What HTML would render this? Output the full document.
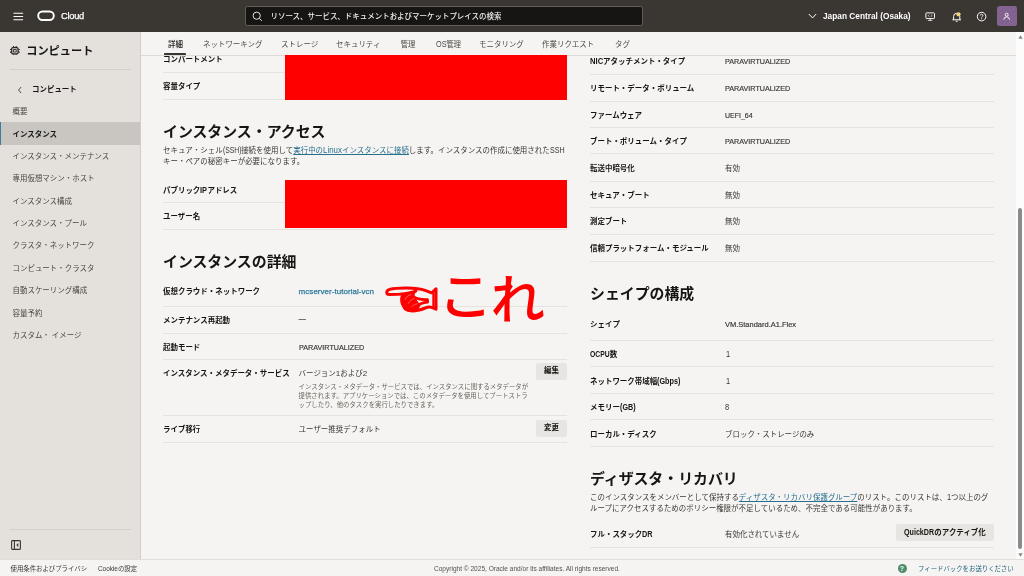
<!DOCTYPE html>
<html lang="ja">
<head>
<meta charset="utf-8">
<title>インスタンスの詳細 | Oracle Cloud</title>
<style>
*{box-sizing:border-box;margin:0;padding:0}
html,body{width:1024px;height:576px;overflow:hidden;background:#f5f4f2}
body{position:relative;font-family:"Liberation Sans","Noto Sans CJK JP",sans-serif;font-size:7.47px;color:#161513;line-height:12px}
.abs,.abs>*{position:absolute}
div,span,a,svg{position:absolute;white-space:nowrap}
#hdr{left:0;top:0;width:1024px;height:32px;background:#3a3632}
#side{left:0;top:32px;width:140px;height:527px;background:#e4e1dd}
#main{left:140px;top:32px;width:876px;height:527px;background:#f5f4f2;border-left:1px solid #d2cec9}
#tabs{left:141px;top:32px;width:875px;height:24px;background:#f5f4f2;border-bottom:1px solid #dddad6}
#foot{left:0;top:559px;width:1024px;height:17px;background:#f5f4f2;border-top:1px solid #e1ddd8}
#sbar{left:1016px;top:32px;width:8px;height:527px;background:#fcfcfc}
.t{font-size:7.47px;line-height:12px;color:#4f4a45;font-weight:400}
.t.on{color:#161513;font-weight:500}
.l{font-size:7.47px;line-height:12px;font-weight:700;color:#161513}
.v{font-size:7.47px;line-height:12px;color:#3a3632}
.h{font-size:14.9px;line-height:20px;font-weight:700;color:#161513}
.p{font-size:7.47px;line-height:10.7px;color:#3a3632;white-space:normal}
.d{font-size:6.4px;line-height:9.07px;color:#6b6660;white-space:normal}
.s{height:1px;background:#e6e3df}
.lk{color:#27708f;text-decoration:underline;text-underline-offset:1px}
.btn{height:17px;border-radius:2px;background:#e7e5e2;font-size:7.47px;line-height:17px;font-weight:700;color:#161513;text-align:center}
.n{font-size:7.47px;line-height:12px;color:#4a4641;left:12.5px;font-weight:400}
.red{background:#fe0000;z-index:5}
.b{position:static;display:inline-block;font-size:8.3px;line-height:10px;transform-origin:0 50%}
.e{position:static;display:inline-block;font-size:8px;-webkit-text-stroke:.18px #3a3632;transform-origin:0 50%;transform:scaleX(.9);vertical-align:baseline}
</style>
</head>
<body>
<div id="root" style="left:0;top:0;width:1024px;height:576px;will-change:transform">
<div id="main"></div>
<div id="content" style="left:0;top:0">
<span class="l" style="left:163px;top:53.75px">コンパートメント</span>
<div class="s" style="left:163px;top:72px;width:404px"></div>
<span class="l" style="left:163px;top:80.75px">容量タイプ</span>
<div class="s" style="left:163px;top:99px;width:404px"></div>
<div class="red" style="left:285px;top:55px;width:282.4px;height:45px"></div>
<span class="h" style="left:163px;top:121.75px">インスタンス・アクセス</span>
<div class="p" style="left:163px;top:145.1px;width:410px">セキュア・シェル<span class="b" style="transform:scaleX(0.82);margin-right:-4.07px;font-weight:400">(SSH)</span>接続を使用して<span class="lk" style="position:static">実行中の<span class="b" style="transform:scaleX(0.95);margin-right:-0.99px;font-weight:400;text-decoration:underline">Linux</span>インスタンスに接続</span>します。インスタンスの作成に使用された<span class="b" style="transform:scaleX(0.86);margin-right:-2.39px;font-weight:400">SSH</span><br>キー・ペアの秘密キーが必要になります。</div>
<span class="l" style="left:163px;top:184.75px">パブリック<span class="b" style="transform:scaleX(0.9);margin-right:-0.78px">IP</span>アドレス</span>
<div class="s" style="left:163px;top:202px;width:404px"></div>
<span class="l" style="left:163px;top:210.75px">ユーザー名</span>
<div class="s" style="left:163px;top:229px;width:404px"></div>
<div class="red" style="left:285px;top:180px;width:282.4px;height:48px"></div>
<span class="h" style="left:163px;top:251.75px">インスタンスの詳細</span>
<span class="l" style="left:163px;top:286.25px">仮想クラウド・ネットワーク</span>
<span class="v" style="left:298.6px;top:286.25px"><span style="position:static;color:#2f7b9c;font-size:8px;letter-spacing:.04px;-webkit-text-stroke:.25px #2f7b9c">mcserver-tutorial-vcn</span></span>
<div class="s" style="left:163px;top:306px;width:404px"></div>
<span class="l" style="left:163px;top:314.75px">メンテナンス再起動</span>
<span class="v" style="left:298.6px;top:314.75px"><span style="position:relative;top:-1.3px;font-weight:700;color:#4a4641">—</span></span>
<div class="s" style="left:163px;top:333px;width:404px"></div>
<span class="l" style="left:163px;top:341.75px">起動モード</span>
<span class="v" style="left:298.6px;top:341.75px"><span class="e">PARAVIRTUALIZED</span></span>
<div class="s" style="left:163px;top:359px;width:404px"></div>
<span class="l" style="left:163px;top:367.75px">インスタンス・メタデータ・サービス</span>
<span class="v" style="left:298.6px;top:367.75px">バージョン<span style="position:static;font-size:8px">1</span>および<span style="position:static;font-size:8px">2</span></span>
<div class="s" style="left:163px;top:415px;width:404px"></div>
<div class="d" style="left:298.6px;top:381.5px;width:235px">インスタンス・メタデータ・サービスでは、インスタンスに関するメタデータが<br>提供されます。アプリケーションでは、このメタデータを使用してブートストラ<br>ップしたり、他のタスクを実行したりできます。</div>
<div class="btn" style="left:536px;top:363.4px;width:31px;height:16.9px;line-height:16.9px">編集</div>
<span class="l" style="left:163px;top:423.75px">ライブ移行</span>
<span class="v" style="left:298.6px;top:423.75px">ユーザー推奨デフォルト</span>
<div class="s" style="left:163px;top:442px;width:404px"></div>
<div class="btn" style="left:536px;top:420px;width:31px;height:16.5px;line-height:16.5px">変更</div>
<span class="l" style="left:590px;top:56px"><span class="b" style="transform:scaleX(0.92);margin-right:-1.2px">NIC</span>アタッチメント・タイプ</span>
<span class="v" style="left:725px;top:56px"><span class="e">PARAVIRTUALIZED</span></span>
<div class="s" style="left:590px;top:74px;width:404px"></div>
<span class="l" style="left:590px;top:82.75px">リモート・データ・ボリューム</span>
<span class="v" style="left:725px;top:82.75px"><span class="e">PARAVIRTUALIZED</span></span>
<div class="s" style="left:590px;top:101px;width:404px"></div>
<span class="l" style="left:590px;top:109.75px">ファームウェア</span>
<span class="v" style="left:725px;top:109.75px"><span class="e" style="transform:scaleX(.875)">UEFI_64</span></span>
<div class="s" style="left:590px;top:127px;width:404px"></div>
<span class="l" style="left:590px;top:135.75px">ブート・ボリューム・タイプ</span>
<span class="v" style="left:725px;top:135.75px"><span class="e">PARAVIRTUALIZED</span></span>
<div class="s" style="left:590px;top:153px;width:404px"></div>
<span class="l" style="left:590px;top:162.75px">転送中暗号化</span>
<span class="v" style="left:725px;top:162.75px">有効</span>
<div class="s" style="left:590px;top:181px;width:404px"></div>
<span class="l" style="left:590px;top:189.75px">セキュア・ブート</span>
<span class="v" style="left:725px;top:189.75px">無効</span>
<div class="s" style="left:590px;top:207px;width:404px"></div>
<span class="l" style="left:590px;top:215.75px">測定ブート</span>
<span class="v" style="left:725px;top:215.75px">無効</span>
<div class="s" style="left:590px;top:234px;width:404px"></div>
<span class="l" style="left:590px;top:242.75px">信頼プラットフォーム・モジュール</span>
<span class="v" style="left:725px;top:242.75px">無効</span>
<div class="s" style="left:590px;top:261px;width:404px"></div>
<span class="h" style="left:590px;top:283.75px">シェイプの構成</span>
<span class="l" style="left:590px;top:318.75px">シェイプ</span>
<span class="v" style="left:725px;top:318.75px"><span class="e" style="transform:scaleX(.935)">VM.Standard.A1.Flex</span></span>
<div class="s" style="left:590px;top:340px;width:404px"></div>
<span class="l" style="left:590px;top:348.75px"><span class="b" style="transform:scaleX(0.82);margin-right:-4.22px">OCPU</span>数</span>
<span class="v" style="left:725px;top:348.75px"><span class="b" style="transform:scaleX(0.9);margin-right:-0.46px;font-weight:400;margin-left:.8px">1</span></span>
<div class="s" style="left:590px;top:366px;width:404px"></div>
<span class="l" style="left:590px;top:375.75px">ネットワーク帯域幅<span class="b" style="transform:scaleX(0.88);margin-right:-3.34px">(Gbps)</span></span>
<span class="v" style="left:725px;top:375.75px"><span class="b" style="transform:scaleX(0.9);margin-right:-0.46px;font-weight:400;margin-left:.8px">1</span></span>
<div class="s" style="left:590px;top:393px;width:404px"></div>
<span class="l" style="left:590px;top:401.75px">メモリー<span class="b" style="transform:scaleX(0.87);margin-right:-2.37px">(GB)</span></span>
<span class="v" style="left:725px;top:401.75px"><span class="b" style="transform:scaleX(0.9);margin-right:-0.46px;font-weight:400">8</span></span>
<div class="s" style="left:590px;top:419px;width:404px"></div>
<span class="l" style="left:590px;top:428.75px">ローカル・ディスク</span>
<span class="v" style="left:725px;top:428.75px">ブロック・ストレージのみ</span>
<div class="s" style="left:590px;top:446px;width:404px"></div>
<span class="h" style="left:590px;top:468.75px">ディザスタ・リカバリ</span>
<div class="p" style="left:590px;top:492.1px;width:410px">このインスタンスをメンバーとして保持する<span class="lk" style="position:static">ディザスタ・リカバリ保護グループ</span>のリスト。このリストは、<span class="b" style="transform:scaleX(0.9);margin-right:-0.46px;font-weight:400">1</span>つ以上のグ<br>ループにアクセスするためのポリシー権限が不足しているため、不完全である可能性があります。</div>
<span class="l" style="left:590px;top:528.75px">フル・スタック<span class="b" style="transform:scaleX(0.88);margin-right:-1.44px">DR</span></span>
<span class="v" style="left:725px;top:528.75px">有効化されていません</span>
<div class="s" style="left:590px;top:547px;width:404px"></div>
<div class="btn" style="left:896px;top:524px;width:98px;line-height:18.4px"><span class="b" style="transform:scaleX(0.86);margin-right:-4.91px">QuickDR</span>のアクティブ化</div>
<svg style="left:380px;top:270px" width="170" height="56" viewBox="380 270 170 56">
<g transform="translate(0 .6)">
<path d="M415.8 290.5 C409.2 293.0 400.8 294.0 389.6 294.0 C385.8 294.0 385.8 290.2 389.6 288.8 C396.7 286.9 416.7 286.5 425.0 289.8 L431.7 292.3 L436.0 288.2 L436.0 308.6 L431.7 306.8 C427.5 305.2 425.0 308.2 419.2 309.4 C413.3 310.8 408.3 310.8 405.0 308.2" fill="none" stroke="#fe0000" stroke-width="3" stroke-linejoin="round" stroke-linecap="round"/>
<path d="M433.5 293.3 L433.5 306.5" fill="none" stroke="#fe0000" stroke-width="2.4" stroke-linecap="round"/>
<path d="M401.5 295.2 C405.0 292.8 411.7 291.1 415.4 290.7 C412.9 294.0 413.3 296.5 416.7 300.7 C419.6 304.0 420.0 307.3 416.7 309.4 C411.7 311.1 406.7 310.7 403.8 307.3 C401.2 304.0 400.4 299.0 401.5 295.2 Z" fill="#fe0000" stroke="#fe0000" stroke-width="1.6" stroke-linejoin="round"/>
<path d="M413.3 296.1 C416.7 298.2 421.7 299.4 427.5 299.0 L427.7 301.5 C423.3 301.9 419.2 302.8 417.9 305.7" fill="none" stroke="#fe0000" stroke-width="2.7" stroke-linejoin="round" stroke-linecap="round"/>
<path d="M405.0 299.0 C405.8 296.5 408.3 294.8 410.8 294.0" fill="none" stroke="#ff8a8a" stroke-width=".7" stroke-linecap="round"/>
<path d="M408.3 302.8 C410.0 300.2 411.7 298.6 414.2 297.8" fill="none" stroke="#ff8a8a" stroke-width=".7" stroke-linecap="round"/>
<path d="M411.7 306.1 C413.3 304.4 415.0 303.6 417.1 303.2" fill="none" stroke="#ff8a8a" stroke-width=".6" stroke-linecap="round"/>
</g>
<text transform="translate(446.9 278.5) scale(.544 .513) translate(-36 -48)" x="20" y="120" font-family="'Liberation Sans','Noto Sans CJK JP',sans-serif" font-size="100" font-weight="500" fill="#fe0000">こ</text>
<text transform="translate(493.3 275.2) scale(.544 .535) translate(-225 -39)" x="220" y="120" font-family="'Liberation Sans','Noto Sans CJK JP',sans-serif" font-size="100" font-weight="500" fill="#fe0000">れ</text>
</svg>
</div>
<div id="tabs">
<span class="t on" style="left:27px;top:6.75px">詳細</span>
<div style="left:23px;top:21px;width:21.6px;height:2px;background:#3a3632;border-radius:1px 1px 0 0"></div>
<span class="t" style="left:62px;top:6.75px">ネットワーキング</span>
<span class="t" style="left:140px;top:6.75px">ストレージ</span>
<span class="t" style="left:195px;top:6.75px">セキュリティ</span>
<span class="t" style="left:259.5px;top:6.75px">管理</span>
<span class="t" style="left:294.6px;top:6.75px"><span class="b" style="transform:scaleX(.88);margin-right:-1.45px;font-weight:400">OS</span>管理</span>
<span class="t" style="left:338px;top:6.75px">モニタリング</span>
<span class="t" style="left:401px;top:6.75px">作業リクエスト</span>
<span class="t" style="left:474px;top:6.75px">タグ</span>
</div>
<div id="side">
<svg style="left:10.200px;top:13.600px" width="9.800" height="9.600" viewBox="0 0 9.800 9.600"><rect x="1.700" y="1.700" width="6.400" height="6.200" rx="1.300" fill="none" stroke="#2b2825" stroke-width="1.300"/><rect x="3.600" y="3.600" width="2.600" height="2.400" fill="none" stroke="#2b2825" stroke-width=".9"/><path d="M3.600 0v1.400M6.200 0v1.400M3.600 8.200v1.400M6.200 8.200v1.400M0 3.500h1.400M0 6.100h1.400M8.400 3.500h1.400M8.400 6.100h1.400" stroke="#2b2825" stroke-width="1.150"/></svg>
<span style="left:26.2px;top:10.25px;font-size:11.200px;line-height:18px;font-weight:700;color:#161513">コンピュート</span>
<div class="s" style="left:10px;top:36.500px;width:120.500px;background:#d4cfca"></div>
<svg style="left:17px;top:54px" width="6" height="8" viewBox="0 0 6 8"><path d="M4.200 1L1.500 4l2.700 3" stroke="#3a3632" stroke-width=".9" fill="none"/></svg>
<span style="left:32px;top:52.25px;font-size:7.470px;line-height:12px;font-weight:700;color:#161513">コンピュート</span>
<span class="n" style="top:73.75px">概要</span>
<div style="left:0;top:90px;width:140px;height:22.500px;background:#c9c6c1;border-left:1px solid #3a7da0"></div>
<span class="n" style="top:96.9px;color:#161513;font-weight:700">インスタンス</span>
<span class="n" style="top:118.75px">インスタンス・メンテナンス</span>
<span class="n" style="top:141.25px">専用仮想マシン・ホスト</span>
<span class="n" style="top:163.75px">インスタンス構成</span>
<span class="n" style="top:185.75px">インスタンス・プール</span>
<span class="n" style="top:208.25px">クラスタ・ネットワーク</span>
<span class="n" style="top:230.75px">コンピュート・クラスタ</span>
<span class="n" style="top:253.25px">自動スケーリング構成</span>
<span class="n" style="top:275.75px">容量予約</span>
<span class="n" style="top:297.75px">カスタム・<span style="position:static;margin-left:2px">イメージ</span></span>
<div class="s" style="left:10px;top:497px;width:120.500px;background:#d4cfca"></div>
<svg style="left:11px;top:508px" width="10" height="10" viewBox="0 0 10 10"><rect x=".6" y=".6" width="8.800" height="8.800" rx=".8" fill="none" stroke="#3a3632" stroke-width="1.100"/><path d="M3.400 .6v8.800" stroke="#3a3632" stroke-width="1.100"/><path d="M7.300 3L5.300 5l2 2z" fill="#3a3632"/></svg>
</div>
<div id="hdr">
<svg style="left:13px;top:12px" width="11" height="9" viewBox="0 0 11 9"><path d="M0.5 1.2h9.6M0.5 4.5h9.6M0.5 7.8h9.6" stroke="#fff" stroke-width="1.1" fill="none"/></svg>
<svg style="left:37px;top:10px" width="19" height="12" viewBox="0 0 19 12"><rect x="1.2" y="1.55" width="15.6" height="8.5" rx="4.25" fill="none" stroke="#fff" stroke-width="1.9"/></svg>
<span style="left:61px;top:9.75px;font-size:9.3px;line-height:12px;color:#fff;font-weight:400;letter-spacing:-.25px;-webkit-text-stroke:.25px #fff">Cloud</span>
<div style="left:245.4px;top:6px;width:397.4px;height:20px;background:#161513;border:1px solid #625d58;border-radius:2.5px"></div>
<svg style="left:251.5px;top:11px" width="11" height="11" viewBox="0 0 11 11"><circle cx="4.7" cy="4.7" r="3.6" fill="none" stroke="#e4e1dd" stroke-width="1"/><path d="M7.3 7.3l2.6 2.6" stroke="#e4e1dd" stroke-width="1" fill="none"/></svg>
<span style="left:270.5px;top:10.5px;font-size:7.47px;line-height:12px;color:#f1efed;font-weight:500">リソース、サービス、ドキュメントおよびマーケットプレイスの検索</span>
<svg style="left:808px;top:13.2px" width="9" height="6.5" viewBox="0 0 9 6.5"><path d="M.8 1l3.700 3.900L8.200 1" stroke="#fff" stroke-width="1" fill="none"/></svg>
<span style="left:823px;top:9.6px;font-size:8.7px;line-height:12px;color:#fff;font-weight:700;transform-origin:0 50%;transform:scaleX(.955)">Japan Central (Osaka)</span>
<svg style="left:925px;top:11.600px" width="10.400" height="9.500" viewBox="0 0 12 11"><rect x="1" y="1" width="10" height="6.600" rx=".8" fill="none" stroke="#fff" stroke-width="1.100"/><path d="M6 7.600v2.200M3.400 10.200h5.200" stroke="#fff" stroke-width="1.100" fill="none"/><path d="M5 3.100L3.800 4.300 5 5.500M7 3.100l1.200 1.200L7 5.500" stroke="#fff" stroke-width=".8" fill="none"/></svg>
<svg style="left:950.500px;top:10.500px" width="12" height="12" viewBox="0 0 12 12"><path d="M2.600 8.800V5.400a3.100 3.100 0 0 1 6.200 0V8.800M1.400 8.800h8.600M4.800 10.300h1.800" stroke="#fff" stroke-width="1" fill="none"/><circle cx="7.500" cy="3.300" r="2.100" fill="#f6d57c"/></svg>
<svg style="left:975.700px;top:10.800px" width="11.200" height="11.200" viewBox="0 0 12 12"><circle cx="6" cy="6" r="4.600" fill="none" stroke="#fff" stroke-width="1.050"/><path d="M4.600 4.800a1.400 1.400 0 1 1 2 1.300c-.4.200-.6.500-.6 1" stroke="#fff" stroke-width=".9" fill="none"/><circle cx="6" cy="8.400" r=".55" fill="#fff"/></svg>
<div style="left:997px;top:6px;width:19.700px;height:20px;border-radius:2.500px;background:#80608f;overflow:hidden"><svg style="left:0;top:0" width="20" height="20" viewBox="0 0 20 20"><path d="M-2 8L10 -2M-2 12L14 -2M-2 16L18 -2M-2 20L22 -2M2 22L22 4M6 22L22 8M10 22L22 12M14 22L22 16" stroke="#8f729c" stroke-width=".7" fill="none"/><circle cx="9.700" cy="8.800" r="1.500" fill="none" stroke="#fff" stroke-width=".85"/><path d="M6.900 13.700a2.800 2.800 0 0 1 5.600 0" stroke="#fff" stroke-width=".85" fill="none"/></svg></div>
</div>
<div id="sbar">
<svg style="left:1.500px;top:2.500px" width="5" height="4" viewBox="0 0 5 4"><path d="M2.500 .3L4.800 3.700H.2z" fill="#8a8a8a"/></svg>
<div style="left:1.800px;top:176px;width:4.200px;height:341px;border-radius:2.100px;background:#8b8b8b"></div>
<svg style="left:1.500px;top:521px" width="5" height="4" viewBox="0 0 5 4"><path d="M2.500 3.700L4.800 .3H.2z" fill="#8a8a8a"/></svg>
</div>
<div id="foot">
<span style="left:10.500px;top:3px;font-size:6.4px;line-height:12px;color:#3a3632">使用条件およびプライバシ</span>
<span style="left:98px;top:3px;font-size:6.4px;line-height:12px;color:#3a3632">Cookieの設定</span>
<span style="left:434px;top:3px;font-size:6.55px;line-height:12px;color:#55504b">Copyright © 2025, Oracle and/or its affiliates. All rights reserved.</span>
<div style="left:897.500px;top:4px;width:9px;height:9px;border-radius:50%;background:#4f8d6b;color:#fff;font-size:6.500px;line-height:9px;text-align:center;font-weight:700">?</div>
<span style="left:918px;top:3px;font-size:6.4px;line-height:12px;color:#20627c">フィードバックをお送りください</span>
</div>
</div>
</body>
</html>
